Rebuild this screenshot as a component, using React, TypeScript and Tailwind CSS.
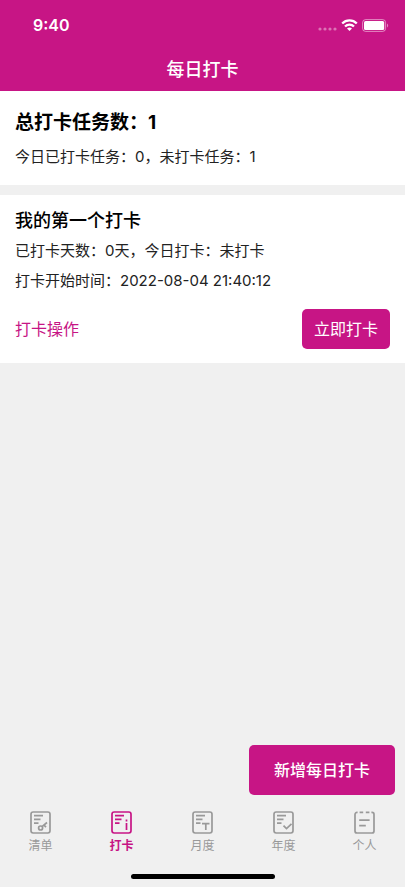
import { useState } from "react"
import type { ReactNode } from "react"

type Tab = {
  id: string
  label: string
  icon: ReactNode
}

// Sheet with three text lines, shared by most of the tab icons
const sheet = (
  <>
    <rect x="1" y="1" width="19" height="21" rx="2.2" />
    <path d="M4 4.6h9M4 8.4h6.5M4 12.2h4.5" />
  </>
)

const tabs: Tab[] = [
  {
    id: "list",
    label: "清单",
    icon: (
      <>
        {sheet}
        <circle cx="10.6" cy="17" r="2" />
        <path d="M12 15.6l5-4.1M14 14.2l2 2" />
      </>
    ),
  },
  {
    id: "clock",
    label: "打卡",
    icon: (
      <>
        {sheet}
        <path d="M15.5 12v7M15.5 8.6v1.8" />
      </>
    ),
  },
  {
    id: "month",
    label: "月度",
    icon: (
      <>
        {sheet}
        <path d="M10 12.6h7.5M13.8 12.6V19" />
      </>
    ),
  },
  {
    id: "year",
    label: "年度",
    icon: (
      <>
        {sheet}
        <path d="M10.5 14.6l3 3 5-4.8" />
      </>
    ),
  },
  {
    id: "me",
    label: "个人",
    icon: (
      <>
        <path d="M3.6 1.4H3a2 2 0 0 0-2 2V20a2 2 0 0 0 2 2h15a2 2 0 0 0 2-2V3.4a2 2 0 0 0-2-2h-.6" />
        <path d="M5.6 1.4h3.6M11.8 1.4h3.6M5.2 9.2h10.4M5.2 14.6h6.6" />
      </>
    ),
  },
]

const StatusBar = () => (
  <div className="flex h-12 items-center justify-between pl-[33px] pr-4 pt-[2px]">
    <span className="text-base font-semibold">9:40</span>
    <div className="flex items-center gap-1">
      <svg width="19" height="4" viewBox="0 0 19 4" fill="currentColor" className="mt-2 opacity-40">
        <circle cx="2" cy="2" r="1.6" />
        <circle cx="7" cy="2" r="1.6" />
        <circle cx="12" cy="2" r="1.6" />
        <circle cx="17" cy="2" r="1.6" />
      </svg>
      <svg width="17" height="12" viewBox="0 0 17 12" fill="none" stroke="currentColor" strokeWidth="2.3">
        <path d="M1.2 4.5a10.3 10.3 0 0 1 14.6 0" />
        <path d="M4 7.5a6.4 6.4 0 0 1 9 0" />
        <path d="M8.5 12L6 9.6a3.6 3.6 0 0 1 5 0z" fill="currentColor" stroke="none" />
      </svg>
      <svg width="27" height="13" viewBox="0 0 27 13" fill="currentColor">
        <rect x="0.6" y="0.6" width="23" height="11.8" rx="3" fill="none" stroke="currentColor" strokeOpacity="0.5" />
        <rect x="2" y="2" width="20.2" height="9" rx="1.6" />
        <path d="M25 4.5a2.4 2.4 0 0 1 0 4z" opacity="0.5" />
      </svg>
    </div>
  </div>
)

const App = () => {
  const [active, setActive] = useState("clock")

  return (
    <div className="flex min-h-screen flex-col bg-[#f0f0f0] font-['Inter','Noto_Sans_CJK_SC',sans-serif] text-[#222]">
      <header className="bg-[#c71585] text-white">
        <StatusBar />
        <h1 className="flex h-[43px] items-center justify-center text-lg font-medium">每日打卡</h1>
      </header>

      <main className="flex flex-1 flex-col">
        {/* Summary */}
        <section className="bg-white px-[15px] pb-4 pt-[18px]">
          <h2 className="text-[19px] leading-7 font-bold text-black">总打卡任务数：1</h2>
          <p className="mt-2 text-[15px] leading-6">今日已打卡任务：0，未打卡任务：1</p>
        </section>

        {/* Task card */}
        <section className="mt-[10px] bg-white px-[15px] pb-[14px] pt-3">
          <h2 className="text-lg font-medium text-black">我的第一个打卡</h2>
          <p className="mt-1 text-[15px] leading-6">已打卡天数：0天，今日打卡：未打卡</p>
          <p className="mt-[6px] text-[15px] leading-6">打卡开始时间：2022-08-04 21:40:12</p>
          <div className="mt-4 flex items-center justify-between">
            <button type="button" className="text-base text-[#c71585]">
              打卡操作
            </button>
            <button type="button" className="h-10 rounded-[5px] bg-[#c71585] px-3 text-base text-white">
              立即打卡
            </button>
          </div>
        </section>

        <div className="mt-auto flex justify-end pr-[10px]">
          <button type="button" className="h-[50px] rounded-[5px] bg-[#c71585] px-[25px] text-base font-medium text-white">
            新增每日打卡
          </button>
        </div>
      </main>

      <nav className="grid grid-cols-5 pt-4">
        {tabs.map(tab => (
          <button
            key={tab.id}
            type="button"
            onClick={() => setActive(tab.id)}
            className={`flex flex-col items-center gap-1 text-xs ${
              active === tab.id ? "font-bold text-[#c71585]" : "text-[#999]"
            }`}
          >
            <svg width="21" height="23" viewBox="0 0 21 23" fill="none" stroke="currentColor" strokeWidth="1.7">
              {tab.icon}
            </svg>
            {tab.label}
          </button>
        ))}
      </nav>

      {/* Home indicator */}
      <div className="flex justify-center pb-2 pt-5">
        <div className="h-[5px] w-36 rounded-full bg-black" />
      </div>
    </div>
  )
}

export default App
